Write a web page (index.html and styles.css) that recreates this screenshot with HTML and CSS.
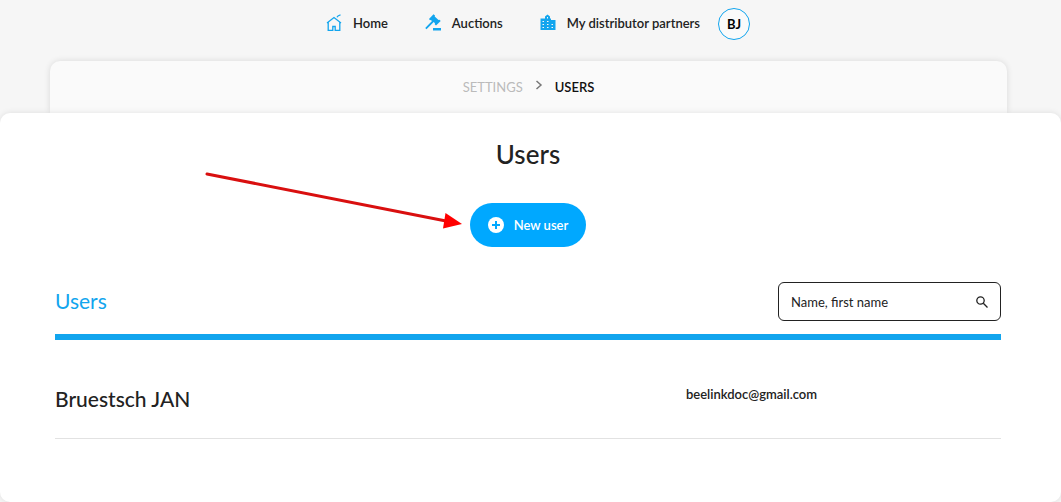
FILE: index.html
```html
<!DOCTYPE html>
<html lang="en">
<head>
    <meta charset="UTF-8">
    <meta name="viewport" content="width=device-width, initial-scale=1.0">
    <title>Users</title>
    <link rel="stylesheet" href="styles.css">
</head>
<body>

    <nav class="main-nav">
        <a class="nav-link" href="#">
            <svg class="nav-icon" width="18" height="18" viewBox="0 0 18 18" fill="none" stroke="#12a5ee" stroke-width="1.3">
                <path d="M2 9 9 3.500 16 9M3.200 8.500V16.300H7.800V12.500h2.400v3.800h4.600V8.500"/>
                <path d="M12 3.200Q12.500 1.600 15.500 .8"/>
            </svg>
            Home
        </a>
        <a class="nav-link" href="#">
            <svg class="nav-icon" width="18" height="18" viewBox="0 0 18 18" fill="#12a5ee">
                <path d="M5 5 9.500 .3l1.500 1.200-.3.900 3.800 3.600 1-.2 1.200 1.300-4.700 4.500-1.300-1.300.3-1-1.300-1.200L2.500 15.300 1.200 14l6.800-6.900-1.200-1.200-.8.300z"/>
                <path d="M9 14h8v2.500H9z"/>
            </svg>
            Auctions
        </a>
        <a class="nav-link" href="#">
            <svg class="nav-icon" width="18" height="18" viewBox="0 0 18 18">
                <path fill="#12a5ee" d="M1.500 4.500H6V2.500L8.500 .5 11 2.500v2h1V6h4.500v10h-15z"/>
                <path fill="#f6f6f6" d="M3.500 7h1.500v1H3.500zM8 3h1v1.500H8zM8 7h1.500v1H8zM3.500 10h1.500v1H3.500zM8 10h1.500v1H8zM12.500 10H14v1h-1.500zM3.500 13h1.500v1H3.500zM8 13h1.500v1H8zM12.500 13H14v1h-1.500z"/>
            </svg>
            My distributor partners
        </a>
        <button type="button" class="avatar">BJ</button>
    </nav>

    <div class="breadcrumb">
        <a class="crumb" href="#">SETTINGS</a>
        <svg class="crumb-arrow" width="8" height="10" viewBox="0 0 8 10" fill="none" stroke="#777" stroke-width="1.500">
            <path d="M1.500 1 6 5 1.500 9"/>
        </svg>
        <span class="crumb-current">USERS</span>
    </div>

    <main class="panel">
        <h1>Users</h1>

        <div class="actions">
            <button type="button" class="new-user-btn">
                <svg width="16" height="16" viewBox="0 0 16 16">
                    <circle cx="8" cy="8" r="8" fill="#fff"/>
                    <path d="M8 4v8M4 8h8" stroke="#00a8ff" stroke-width="2"/>
                </svg>
                New user
            </button>
            <!-- Arrow pointing at the button -->
            <svg class="pointer" width="260" height="60" viewBox="0 0 260 60">
                <path d="M3 3 242 50" stroke="#d90f0f" stroke-width="3" stroke-linecap="round"/>
                <path d="M241.500 42 258 53 239 57.500z" fill="#f00"/>
            </svg>
        </div>

        <div class="list-header">
            <h2>Users</h2>
            <form class="search">
                <input type="text" id="search" name="search" placeholder="Name, first name" aria-label="Name, first name">
                <button type="submit" class="search-btn" aria-label="Search">
                    <svg width="12" height="12" viewBox="0 0 12 12" fill="none" stroke="#222" stroke-width="1.300">
                        <circle cx="4.500" cy="4.500" r="3.700"/>
                        <path d="M7.300 7.300 11.500 11.500"/>
                    </svg>
                </button>
            </form>
        </div>

        <table class="user-list">
            <tr>
                <td class="user-name">Bruestsch JAN</td>
                <td class="user-email">beelinkdoc@gmail.com</td>
            </tr>
        </table>
    </main>

</body>
</html>
```
FILE: styles.css
```css
* {
    box-sizing: border-box;
}

body {
    font-family: Lato, sans-serif;
    margin: 0;
    min-height: 100vh;
    display: flex;
    flex-direction: column;
    background-color: #f6f6f6;
    color: #222;
}

/* Top navigation */
.main-nav {
    display: flex;
    justify-content: center;
    align-items: center;
    padding: 8px 0 21px 14px;
}

.nav-link {
    display: flex;
    align-items: center;
    margin-right: 36px;
    padding-bottom: 2px;
    color: #222;
    font-size: 13px;
    font-weight: 600;
    line-height: 20px;
    text-decoration: none;
}

.nav-icon {
    margin-right: 10px;
}

.avatar {
    width: 32px;
    height: 32px;
    margin-left: -18px;
    padding: 0;
    border: 1px solid #12a5ee;
    border-radius: 50%;
    background-color: #fafafa;
    color: #000;
    font-family: inherit;
    font-size: 13px;
    font-weight: 700;
}

/* Breadcrumb card */
.breadcrumb {
    display: flex;
    justify-content: center;
    align-items: center;
    height: 52px;
    margin: 0 54px 0 50px;
    border-radius: 10px 10px 0 0;
    background-color: #fafafa;
    box-shadow: 0 0 6px rgba(0, 0, 0, 0.12);
    font-size: 13px;
    line-height: 20px;
}

.crumb {
    color: #bbb;
    text-decoration: none;
}

.crumb-arrow {
    margin: 0 12px 4px;
}

.crumb-current {
    color: #111;
    font-weight: 600;
}

/* White panel */
.panel {
    position: relative;
    flex: 1;
    padding: 24px 60px 24px 55px;
    border-radius: 10px;
    background-color: #fff;
    box-shadow: 0 0 6px rgba(0, 0, 0, 0.1);
}

h1 {
    margin: 0;
    font-size: 26px;
    font-weight: 500;
    line-height: 34px;
    text-align: center;
}

.actions {
    position: relative;
    display: flex;
    justify-content: center;
    margin: 32px 0 35px;
}

.new-user-btn {
    display: flex;
    align-items: center;
    gap: 10px;
    height: 44px;
    padding: 0 18px;
    border: none;
    border-radius: 22px;
    background-color: #00a8ff;
    color: #fff;
    font-family: inherit;
    font-size: 13px;
    font-weight: 600;
    cursor: pointer;
}

.pointer {
    position: absolute;
    top: -32px;
    right: calc(50% + 64px);
}

.list-header {
    display: flex;
    justify-content: space-between;
    align-items: center;
    padding-bottom: 13px;
    border-bottom: 6px solid #12a5ee;
}

h2 {
    margin: 0;
    color: #12a5ee;
    font-size: 21px;
    font-weight: 400;
    line-height: 28px;
    padding-bottom: 2px;
}

.search {
    display: flex;
    align-items: center;
    width: 223px;
    height: 39px;
    padding: 0 12px;
    border: 1px solid #222;
    border-radius: 6px;
}

.search input {
    flex: 1;
    min-width: 0;
    padding: 0;
    border: none;
    outline: none;
    background: none;
    color: #222;
    font-family: inherit;
    font-size: 13px;
}

.search input::placeholder {
    color: #222;
}

.search-btn {
    display: flex;
    padding: 0;
    border: none;
    background: none;
    cursor: pointer;
}

/* User rows */
.user-list {
    width: 100%;
    margin-top: 38px;
    border-collapse: collapse;
    table-layout: fixed;
}

.user-list td {
    height: 60px;
    padding: 0;
    border-bottom: 1px solid #e2e2e2;
    vertical-align: top;
}

.user-list .user-name {
    width: 66.7%;
    padding-top: 7px;
    font-size: 21px;
    font-weight: 500;
    line-height: 28px;
}

.user-list .user-email {
    padding-top: 6px;
    font-size: 13px;
    font-weight: 600;
    line-height: 20px;
}
```
